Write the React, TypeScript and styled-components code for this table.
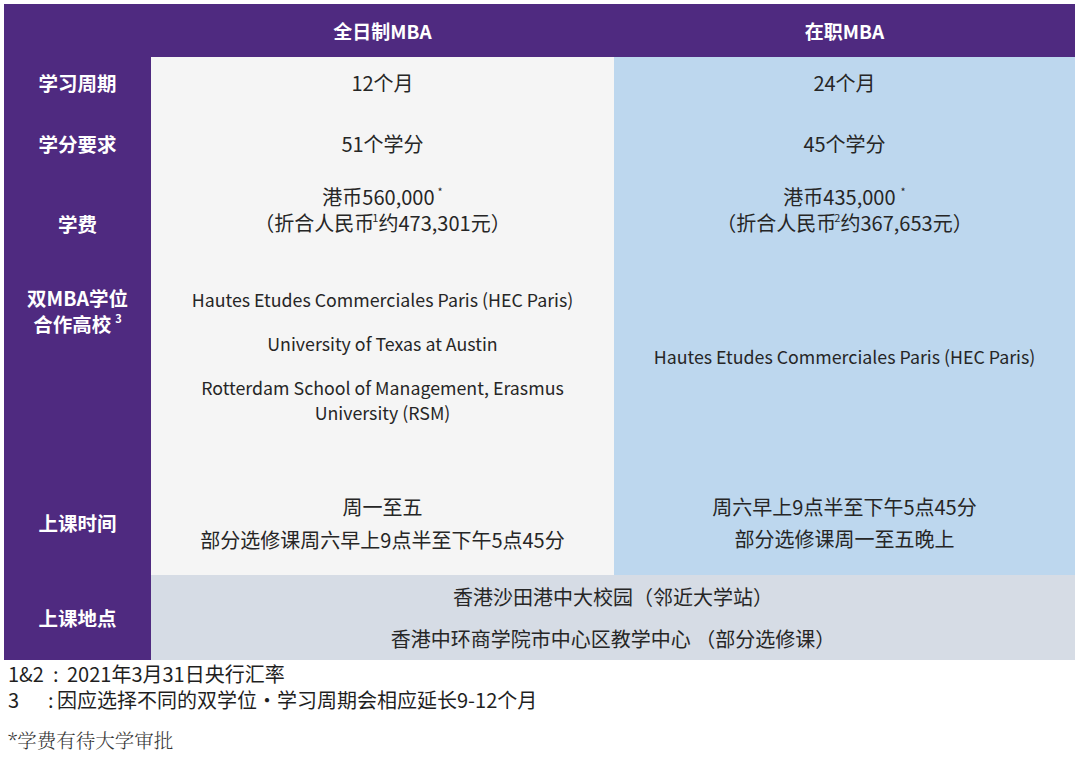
import React from "react";
import styled, { createGlobalStyle, css } from "styled-components";

const GlobalStyle = createGlobalStyle`
  html, body { margin: 0; padding: 0; background: #ffffff; }
  body { font-family: "Noto Sans CJK SC", "Noto Sans", sans-serif; color: #262626; }
`;

const PURPLE = "#4f2a80";

const Page = styled.div`
  padding: 4px 5px 0 4px;
`;

const Table = styled.div`
  display: grid;
  grid-template-columns: 147px 463px 461px;
  grid-template-rows: 53px 51px 72px 88px 203px 104px 85px;
  background: ${PURPLE};
`;

const Corner = styled.div``;

const HeadCell = styled.div`
  display: flex;
  align-items: center;
  justify-content: center;
  color: #ffffff;
  font-size: 19px;
  font-weight: 700;
  padding-bottom: 1px;
`;

const Label = styled.div<{ $align?: "center" | "start"; $pt?: number; $pb?: number }>`
  display: flex;
  flex-direction: column;
  align-items: center;
  justify-content: ${(p) => (p.$align === "start" ? "flex-start" : "center")};
  padding-top: ${(p) => p.$pt ?? 0}px;
  padding-bottom: ${(p) => p.$pb ?? 0}px;
  color: #ffffff;
  font-size: 19.5px;
  font-weight: 700;
  line-height: 26px;
  text-align: center;
`;

const tones = {
  white: "#f5f5f5",
  blue: "#bdd7ee",
  gray: "#d6dce5",
};

const Cell = styled.div<{ $tone: keyof typeof tones; $span?: boolean; $pt?: number; $pb?: number }>`
  display: flex;
  flex-direction: column;
  align-items: center;
  justify-content: center;
  background: ${(p) => tones[p.$tone]};
  padding-top: ${(p) => p.$pt ?? 0}px;
  padding-bottom: ${(p) => p.$pb ?? 0}px;
  font-size: 20px;
  color: #262626;
  text-align: center;
  ${(p) =>
    p.$span &&
    css`
      grid-column: 2 / span 2;
    `}
`;

const Line = styled.div<{ $lh?: number }>`
  line-height: ${(p) => p.$lh ?? 26}px;
  white-space: nowrap;
`;

const School = styled.div`
  font-size: 17.8px;
  line-height: 25px;
  margin: 0 0 19px;
  &:last-child { margin-bottom: 0; }
`;

const Sup = styled.sup<{ $ml?: number }>`
  font-size: 11px;
  line-height: 0;
  vertical-align: 9px;
  margin-left: ${(p) => p.$ml ?? 0}px;
`;

const Notes = styled.div`
  padding: 1px 0 0 4px;
  font-size: 20px;
  color: #1f1f1f;
`;

const NoteRow = styled.div`
  display: flex;
  line-height: 26px;
  white-space: nowrap;
`;

const NoteKey = styled.span<{ $w: number }>`
  width: ${(p) => p.$w}px;
  flex: none;
`;

const Colon = styled.span<{ $w: number }>`
  width: ${(p) => p.$w}px;
  flex: none;
`;

const Approval = styled.div`
  margin-top: 14px;
  line-height: 26px;
  font-size: 19.5px;
  color: #333333;
  font-family: "Noto Serif CJK SC", "Noto Sans CJK SC", serif;
  font-weight: 300;
`;

export default function App() {
  return (
    <>
      <GlobalStyle />
      <Page>
        <Table>
          <Corner />
          <HeadCell>全日制MBA</HeadCell>
          <HeadCell>在职MBA</HeadCell>

          <Label>学习周期</Label>
          <Cell $tone="white">
            <Line>12个月</Line>
          </Cell>
          <Cell $tone="blue">
            <Line>24个月</Line>
          </Cell>

          <Label>学分要求</Label>
          <Cell $tone="white">
            <Line>51个学分</Line>
          </Cell>
          <Cell $tone="blue">
            <Line>45个学分</Line>
          </Cell>

          <Label>学费</Label>
          <Cell $tone="white" $pb={28}>
            <Line>
              港币560,000<Sup $ml={3}>*</Sup>
            </Line>
            <Line>
              （折合人民币<Sup $ml={-2}>1</Sup>约473,301元）
            </Line>
          </Cell>
          <Cell $tone="blue" $pb={28}>
            <Line>
              港币435,000<Sup $ml={5}>*</Sup>
            </Line>
            <Line>
              （折合人民币<Sup $ml={-2}>2</Sup>约367,653元）
            </Line>
          </Cell>

          <Label $align="start" $pt={17}>
            <div>双MBA学位</div>
            <div>
              合作高校<Sup $ml={4}>3</Sup>
            </div>
          </Label>
          <Cell $tone="white" $pb={27}>
            <School>Hautes Etudes Commerciales Paris (HEC Paris)</School>
            <School>University of Texas at Austin</School>
            <School>
              Rotterdam School of Management, Erasmus
              <br />
              University (RSM)
            </School>
          </Cell>
          <Cell $tone="blue" $pb={27}>
            <School>Hautes Etudes Commerciales Paris (HEC Paris)</School>
          </Cell>

          <Label>上课时间</Label>
          <Cell $tone="white">
            <Line $lh={33}>周一至五</Line>
            <Line $lh={33}>部分选修课周六早上9点半至下午5点45分</Line>
          </Cell>
          <Cell $tone="blue">
            <Line $lh={32}>周六早上9点半至下午5点45分</Line>
            <Line $lh={32}>部分选修课周一至五晚上</Line>
          </Cell>

          <Label>上课地点</Label>
          <Cell $tone="gray" $span>
            <Line $lh={42}>香港沙田港中大校园（邻近大学站）</Line>
            <Line $lh={42}>香港中环商学院市中心区教学中心 （部分选修课）</Line>
          </Cell>
        </Table>
        <Notes>
          <NoteRow>
            <NoteKey $w={45}>1&amp;2</NoteKey>
            <Colon $w={14}>:</Colon>
            <span>2021年3月31日央行汇率</span>
          </NoteRow>
          <NoteRow>
            <NoteKey $w={40}>3</NoteKey>
            <Colon $w={9}>:</Colon>
            <span>因应选择不同的双学位・学习周期会相应延长9-12个月</span>
          </NoteRow>
          <Approval>*学费有待大学审批</Approval>
        </Notes>
      </Page>
    </>
  );
}
